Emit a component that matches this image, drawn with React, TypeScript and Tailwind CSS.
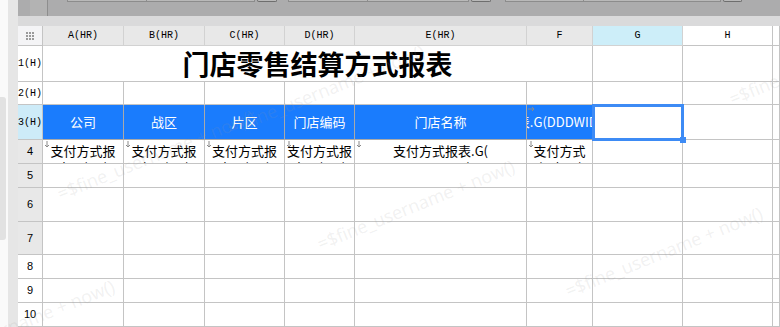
import React from "react";

const CJK = { fontFamily: '"Noto Sans CJK SC", "Noto Sans", sans-serif' };
const MONO = { fontFamily: '"Liberation Mono", "DejaVu Sans Mono", monospace' };

const cols = ["A(HR)", "B(HR)", "C(HR)", "D(HR)", "E(HR)", "F", "G", "H", ""];

function DownMark() {
  return (
    <svg width="6" height="7" viewBox="0 0 6 7" className="absolute left-[1px] top-[1px]">
      <path d="M3 0v6M1 4l2 2 2-2" stroke="#8a8a8a" strokeWidth="1" fill="none" />
    </svg>
  );
}

function RightMark() {
  return (
    <svg width="7" height="6" viewBox="0 0 7 6" className="absolute left-[1px] top-[1px]">
      <path d="M0 3h6M4 1l2 2-2 2" stroke="#8a8a8a" strokeWidth="1" fill="none" />
    </svg>
  );
}

function Corner() {
  return (
    <div className="grid grid-cols-3 gap-[1px] w-[9px]">
      {Array.from({ length: 9 }).map((_, i) => (
        <span key={i} className="w-[2px] h-[2px] bg-[#9a9a9a]" />
      ))}
    </div>
  );
}

function RowHead({ label, bg, mono = false }: { label: string; bg: string; mono?: boolean }) {
  return (
    <div
      className={`${bg} border-r border-b border-[#c4c4c4] flex items-center justify-center text-black ${mono ? "text-[10px]" : "text-[11px]"}`}
      style={mono ? MONO : { fontFamily: '"Liberation Sans", Arial, sans-serif' }}
    >
      {label}
    </div>
  );
}

const cell = "border-r border-b border-[#c4c4c4] bg-white";

const row4 = [
  ["支付方式报", "表.G(GS)"],
  ["支付方式报", "表.G(ZQ)"],
  ["支付方式报", "表.G(PQ)"],
  ["支付方式报", "表.G(MD)"],
  ["支付方式报表.G(", "DDDWMC)"],
  ["支付方式", "报表.G("],
];

function Watermark({ className }: { className: string }) {
  return (
    <span
      className={`absolute pointer-events-none whitespace-nowrap text-[18px] text-[#9a9a9a]/15 -rotate-[22deg] origin-left ${className}`}
      style={{ fontFamily: '"Open Sans", sans-serif' }}
    >
      =$fine_username + now()
    </span>
  );
}

export default function App() {
  const rows: { label: string; bg: string; mono?: boolean }[] = [
    { label: "1(H)", bg: "bg-white", mono: true },
    { label: "2(H)", bg: "bg-white", mono: true },
    { label: "3(H)", bg: "bg-[#cdebf8]", mono: true },
    { label: "4", bg: "bg-[#e8e8e8]" },
    { label: "5", bg: "bg-[#e8e8e8]" },
    { label: "6", bg: "bg-[#e8e8e8]" },
    { label: "7", bg: "bg-[#e8e8e8]" },
    { label: "8", bg: "bg-white" },
    { label: "9", bg: "bg-white" },
    { label: "10", bg: "bg-white" },
  ];

  return (
    <div className="w-[780px] h-[327px] flex overflow-hidden bg-white relative">
      {/* left gutter */}
      <div className="w-[8px] bg-[#fafafa] relative">
        <div className="absolute left-0 top-[97px] w-[6px] h-[143px] bg-[#e2e2e2] rounded-r-[3px]" />
      </div>
      <div className="w-[10px] bg-[#e6e6e6]" />

      <div className="flex-1 flex flex-col min-w-0">
        {/* toolbar remnants */}
        <div className="h-[16px] bg-[#acacad] flex items-start">
          <div className="ml-[12px] w-[18px] h-[16px] bg-[#b3b3b3] border-r border-[#8e8e8e]" />
          <div className="ml-[19px] w-[80px] h-[2px] bg-[#b9b9b9] border border-t-0 border-[#8c8c8c]" />
          <div className="w-[108px] h-[2px] bg-[#b9b9b9] border border-t-0 border-l-0 border-[#8c8c8c]" />
          <div className="ml-[2px] w-[20px] h-[2px] bg-[#b9b9b9] border border-t-0 border-[#6e6e6e] rounded-b-[2px]" />
          <div className="ml-[11px] w-[80px] h-[2px] bg-[#b9b9b9] border border-t-0 border-[#8c8c8c]" />
          <div className="w-[101px] h-[2px] bg-[#b9b9b9] border border-t-0 border-l-0 border-[#8c8c8c]" />
          <div className="ml-[2px] w-[20px] h-[2px] bg-[#b9b9b9] border border-t-0 border-[#6e6e6e] rounded-b-[2px]" />
          <div className="ml-[14px] w-[79px] h-[2px] bg-[#b9b9b9] border border-t-0 border-[#8c8c8c]" />
          <div className="w-[137px] h-[2px] bg-[#b9b9b9] border border-t-0 border-l-0 border-[#8c8c8c]" />
          <div className="ml-[2px] w-[19px] h-[2px] bg-[#b9b9b9] border border-t-0 border-[#6e6e6e] rounded-b-[2px]" />
        </div>
        <div className="h-[10px] bg-[#dadadb]" />

        {/* sheet */}
        <div className="relative grid grid-cols-[25px_81px_81px_80px_70px_172px_66px_90px_90px_1fr] grid-rows-[20px_36px_23px_35px_24px_24px_34px_33px_24px_24px_24px]">
          {/* column header */}
          <div className="bg-[#f4f4f6] border-r border-b border-[#c4c4c4] flex items-center justify-center">
            <Corner />
          </div>
          {cols.map((c, i) => (
            <div
              key={i}
              className={`border-r border-b flex items-center justify-center text-[10px] text-black ${
                i < 6 ? "bg-[#e8e8e8] border-[#d2d2d2]" : i === 6 ? "bg-[#cdeef9] border-[#d2d2d2]" : "bg-white border-[#c4c4c4]"
              }`}
              style={MONO}
            >
              {c}
            </div>
          ))}

          {/* row 1 */}
          <RowHead {...rows[0]} />
          <div className={`${cell} col-span-6 flex items-center justify-center`}>
            <span className="text-[27px] font-bold text-black leading-none" style={CJK}>
              门店零售结算方式报表
            </span>
          </div>
          <div className={cell} />
          <div className={cell} />
          <div className={cell} />

          {/* row 2 */}
          <RowHead {...rows[1]} />
          {Array.from({ length: 9 }).map((_, i) => (
            <div key={i} className={cell} />
          ))}

          {/* row 3 */}
          <RowHead {...rows[2]} />
          {["公司", "战区", "片区", "门店编码", "门店名称"].map((t) => (
            <div
              key={t}
              className="bg-[#1a7cfd] border-r border-b border-[#a9a9a9] flex items-center justify-center text-white text-[13px]"
              style={CJK}
            >
              {t}
            </div>
          ))}
          <div
            className="relative bg-[#1a7cfd] border-r border-b border-[#a9a9a9] flex items-center justify-center overflow-hidden text-white text-[13px] whitespace-nowrap"
            style={CJK}
          >
            <span className="shrink-0">支付方式报表.G(DDDWID)结算金额元</span>
            <RightMark />
          </div>
          <div className={`${cell} relative`}>
            <div className="absolute -left-[1px] -top-[1px] w-[92px] h-[37px] border-[3px] border-[#3d8bf5] z-10" />
            <div className="absolute left-[87px] top-[32px] w-[6px] h-[6px] bg-[#3d8bf5] z-10" />
          </div>
          <div className={cell} />
          <div className={cell} />

          {/* row 4 */}
          <RowHead {...rows[3]} />
          {row4.map(([a, b], i) => (
            <div
              key={i}
              className={`${cell} relative overflow-hidden flex flex-col items-center pt-[2px] text-[13px] leading-[17px] text-black whitespace-nowrap`}
              style={CJK}
            >
              <span>{a}</span>
              <span>{b}</span>
              <DownMark />
            </div>
          ))}
          <div className={cell} />
          <div className={cell} />
          <div className={cell} />

          {/* rows 5-10 */}
          {rows.slice(4).map((r) => (
            <React.Fragment key={r.label}>
              <RowHead {...r} />
              {Array.from({ length: 9 }).map((_, i) => (
                <div key={i} className={cell} />
              ))}
            </React.Fragment>
          ))}

          {/* watermarks */}
          <Watermark className="left-[40px] top-[155px]" />
          <Watermark className="left-[300px] top-[205px]" />
          <Watermark className="left-[210px] top-[90px]" />
          <Watermark className="left-[548px] top-[252px]" />
          <Watermark className="left-[712px] top-[60px]" />
          <Watermark className="left-[-100px] top-[325px]" />
        </div>
      </div>
    </div>
  );
}
